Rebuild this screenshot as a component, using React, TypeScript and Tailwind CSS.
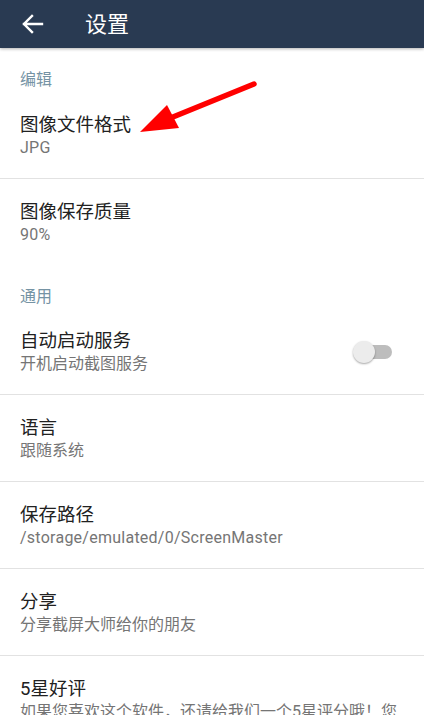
import React from "react";

/** Settings screen: header, grouped preference rows, annotation arrow. */

interface Pref {
  title: string;
  summary: string;
  toggle?: boolean;
  divider?: boolean;
  latin?: boolean;
}

const editPrefs: Pref[] = [
  { title: "图像文件格式", summary: "JPG", divider: true, latin: true },
  { title: "图像保存质量", summary: "90%", latin: true },
];

const generalPrefs: Pref[] = [
  { title: "自动启动服务", summary: "开机启动截图服务", toggle: true, divider: true },
  { title: "语言", summary: "跟随系统", divider: true },
  { title: "保存路径", summary: "/storage/emulated/0/ScreenMaster", divider: true, latin: true },
  { title: "分享", summary: "分享截屏大师给你的朋友", divider: true },
  { title: "5星好评", summary: "如果您喜欢这个软件，还请给我们一个5星评分哦！您的支持是我们前进的动力" },
];

function SectionLabel({ text, pb }: { text: string; pb: string }) {
  return (
    <div className={`px-5 pt-[22px] ${pb} text-[16px] leading-5 text-[#7593a4]`}>
      {text}
    </div>
  );
}

function Row({ pref }: { pref: Pref }) {
  return (
    <>
      <div className="flex items-center pl-5 pr-[24px] pt-[21px] pb-[19px]">
        <div className="flex-1 min-w-0">
          <div className="text-[18.5px] leading-6 text-[#212121]">{pref.title}</div>
          <div
            className={`text-[16px] leading-[22px] text-[#757575] ${
              pref.latin ? "tracking-[0.25px]" : ""
            }`}
          >
            {pref.summary}
          </div>
        </div>
        {pref.toggle && (
          <div className="relative mr-[7px] w-[40px] h-[22px] flex items-center">
            <div className="ml-[4px] w-[35px] h-[14px] rounded-full bg-[#bdbdbd]" />
            <div className="absolute left-0 top-0 w-[22px] h-[22px] rounded-full bg-[#ececec] shadow-[0_1px_2px_rgba(0,0,0,0.35)]" />
          </div>
        )}
      </div>
      {pref.divider && <div className="h-px bg-[#e2e2e2]" />}
    </>
  );
}

export default function App() {
  return (
    <div
      className="relative w-[424px] h-[715px] overflow-hidden bg-white"
      style={{ fontFamily: 'Roboto, "Noto Sans CJK SC", sans-serif' }}
    >
      {/* Toolbar */}
      <header className="relative z-10 h-12 bg-[#293a52] flex items-center shadow-[0_1px_3px_rgba(0,0,0,0.3)]">
        <svg width="24" height="24" viewBox="0 0 24 24" className="ml-[21px]">
          <path
            d="M3 12h18M11 4l-8 8 8 8"
            fill="none"
            stroke="white"
            strokeWidth="2.4"
            strokeLinecap="square"
          />
        </svg>
        <span className="ml-[40px] text-[22px] text-white">设置</span>
      </header>

      <SectionLabel text="编辑" pb="pb-[2px]" />
      {editPrefs.map((p) => (
        <Row key={p.title} pref={p} />
      ))}

      <SectionLabel text="通用" pb="pb-[1px]" />
      {generalPrefs.map((p) => (
        <Row key={p.title} pref={p} />
      ))}

      {/* Red annotation arrow */}
      <svg className="absolute left-0 top-0" width="424" height="715" viewBox="0 0 424 715">
        <line x1="254" y1="84" x2="168" y2="119" stroke="#ff0000" strokeWidth="5.5" strokeLinecap="round" />
        <polygon points="140,132 167,105 179,128" fill="#ff0000" />
      </svg>
    </div>
  );
}
